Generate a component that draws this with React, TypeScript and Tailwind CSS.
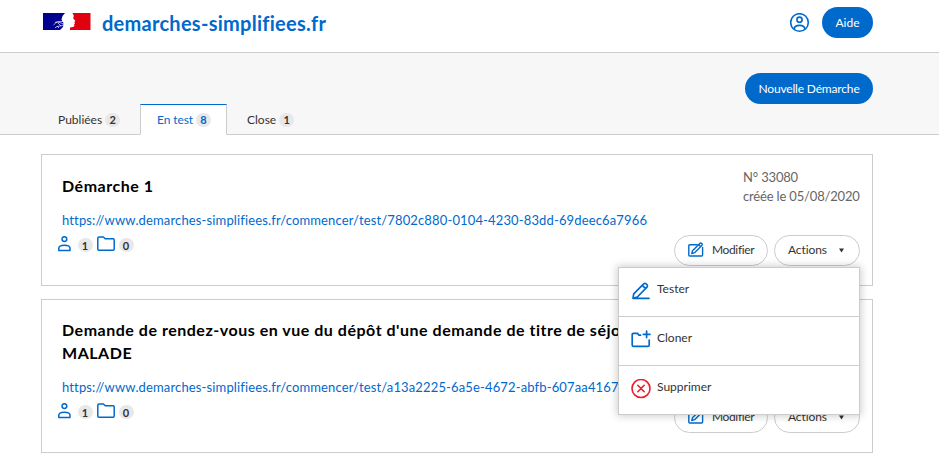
import type { ReactNode } from "react";

function FlagLogo() {
  return (
    <svg className="h-[17px] w-[48px]" viewBox="0 0 48 17">
      <path d="M0 0H22L19.5 3L18.5 6.5L20.5 10L20 14L17 17H0Z" fill="#000091" />
      <path d="M29.5 0H47.5V17H27V14.5L30 14L31.5 13L31 11.5L32 10.5L31.3 9.3L32.3 8L30.2 5.2L30.8 2.8Z" fill="#e1000f" />
      <path d="M10.5 12C13 9 16 8 20 8.5M12 9.5C15 8 17 10 21 11M12 15C15 12 17 14 20 12M15 10L18 13M14 13L16 15" stroke="#fff" strokeWidth=".7" fill="none" />
    </svg>
  );
}

function AccountIcon() {
  return (
    <svg className="size-5" viewBox="0 0 20 20" fill="none" stroke="#0069cc" strokeWidth="1.6">
      <circle cx="9.5" cy="9.5" r="8.8" />
      <circle cx="9.5" cy="6.7" r="2.6" />
      <path d="M4.2 16.2C4.2 13.4 6.2 12.4 9.5 12.4S14.8 13.4 14.8 16.2" />
    </svg>
  );
}

function PersonIcon() {
  return (
    <svg className="h-4 w-[14px]" viewBox="0 0 14 16" fill="none" stroke="#0069cc" strokeWidth="1.5">
      <circle cx="6.4" cy="3.1" r="2.4" />
      <path d="M.8 14.5V12.3C.8 10 2.8 9.2 6.4 9.2S12 10 12 12.3V14.5Z" strokeLinejoin="round" />
    </svg>
  );
}

function FolderIcon() {
  return (
    <svg className="h-4 w-[18px]" viewBox="0 0 18 16" fill="none" stroke="#0069cc" strokeWidth="1.5" strokeLinejoin="round">
      <path d="M.8 13V2.2Q.8 1 2 1H6.4L8.2 2.7H16Q17.2 2.7 17.2 3.9V13Q17.2 14.2 16 14.2H2Q.8 14.2 .8 13Z" />
    </svg>
  );
}

function EditIcon() {
  return (
    <svg className="size-4" viewBox="0 0 16 16" fill="none" stroke="#0069cc" strokeWidth="1.4" strokeLinejoin="round" strokeLinecap="round">
      <path d="M9.3 2.7H1.8Q.8 2.7 .8 3.7V13Q.8 14 1.8 14H13.6Q14.6 14 14.6 13V5.5" />
      <path d="M3.8 11.5L4.5 8.7L11.8 1.4Q12.8 .6 13.8 1.5Q14.6 2.4 13.8 3.4L6.6 10.7ZM10.7 2.7L12.7 4.6" />
    </svg>
  );
}

function PencilIcon() {
  return (
    <svg className="size-5" viewBox="0 0 20 20" fill="none" stroke="#0069cc" strokeWidth="1.7" strokeLinejoin="round" strokeLinecap="round">
      <path d="M2 17.3L2.7 12.8L12.7 2.8Q14 1.8 15.3 3L16 3.7Q17 5 16 6.2L6.3 16L2 17.3H18M11.3 4.3L14.6 7.6" />
    </svg>
  );
}

function FolderPlusIcon() {
  return (
    <svg className="size-5" viewBox="0 0 20 20" fill="none" stroke="#0069cc" strokeWidth="1.7" strokeLinejoin="round" strokeLinecap="round">
      <path d="M9.5 5.2H8L6.5 3.4H2.5Q1.2 3.4 1.2 4.7V15Q1.2 16.4 2.6 16.4H16.7Q18.2 16.4 18.2 15V10" />
      <path d="M15.6 1V7.6M12.3 4.3H19" />
    </svg>
  );
}

function DeleteIcon() {
  return (
    <svg className="size-5" viewBox="0 0 20 20" fill="none" stroke="#ed1c2e" strokeWidth="1.6" strokeLinecap="round">
      <circle cx="10" cy="9.5" r="9" />
      <path d="M6.8 6.3L13.2 12.7M13.2 6.3L6.8 12.7" />
    </svg>
  );
}

function Badge({ children }: { children: ReactNode }) {
  return (
    <span className="flex h-[14px] min-w-[15px] items-center justify-center rounded-full bg-[#e8e8e8] text-[11px] leading-none font-bold">
      {children}
    </span>
  );
}

function MenuItem({ icon, label }: { icon: ReactNode; label: string }) {
  return (
    <li className="flex h-[49px] items-start gap-[6px] border-b border-[#ccc] pt-3 pl-3 last:h-12 last:border-b-0">
      <span className="mt-px">{icon}</span>
      <span className="text-xs leading-[17px]">{label}</span>
    </li>
  );
}

function ActionsMenu() {
  return (
    <ul className="absolute top-8 right-0 z-10 w-[242px] border border-[#ccc] bg-white shadow-[0_0_8px_1px_rgba(0,0,0,0.2)]">
      <MenuItem icon={<PencilIcon />} label="Tester" />
      <MenuItem icon={<FolderPlusIcon />} label="Cloner" />
      <MenuItem icon={<DeleteIcon />} label="Supprimer" />
    </ul>
  );
}

type CardProps = { title: string; url: string; menuOpen?: boolean; number?: string; className: string };

function ProcedureCard({ title, url, menuOpen, number, className }: CardProps) {
  return (
    <article className={`flex justify-between border border-[#ccc] pl-5 ${className}`}>
      <div className="w-[612px] shrink-0">
        <h2 className="text-base leading-[23px] font-bold tracking-[0.52px] text-black">{title}</h2>
        <a className="mt-[13.5px] block text-[13px] leading-[18px] tracking-[0.14px] whitespace-nowrap text-[#0069cc]">{url}</a>
        <div className="mt-[7.5px] -ml-1 flex h-[18px] items-start">
          <PersonIcon />
          <span className="mt-[2px] ml-[5.5px]"><Badge>1</Badge></span>
          <span className="ml-1"><FolderIcon /></span>
          <span className="mt-[2px] ml-1"><Badge>0</Badge></span>
        </div>
      </div>
      <div className="flex flex-1 flex-col items-end justify-between pr-3 pb-[19px]">
        <p className="-mt-[6px] w-[117px] text-[13px] leading-[19px] tracking-[-0.17px] whitespace-nowrap text-[#666]">
          {number && (
            <>
              N° {number}
              <br />
              créée le 05/08/2020
            </>
          )}
        </p>
        <div className="relative flex shrink-0 gap-[6px] text-xs">
          <button className="flex h-[31px] w-[94px] items-center gap-2 rounded-full border border-[#ccc] bg-white pb-px pl-[13px] tracking-[-0.37px]">
            <EditIcon />
            Modifier
          </button>
          <button className="flex h-[31px] w-[86px] items-center rounded-full border border-[#ccc] bg-white pb-px pl-[13px] tracking-[-0.1px]">
            Actions
            <svg className="ml-3 h-[5px] w-[5px]" viewBox="0 0 6 5"><path d="M0 0H6L3 5Z" fill="#333" /></svg>
          </button>
          {menuOpen && <ActionsMenu />}
        </div>
      </div>
    </article>
  );
}

export default function App() {
  return (
    <div className="h-[456px] overflow-hidden bg-white font-[Lato,sans-serif] text-[#333]">
      <header className="h-[53px] border-b border-[#ccc]">
        <div className="ml-[41px] flex h-[45px] w-[832px] items-center">
          <div className="mt-[-3px] ml-[2px]"><FlagLogo /></div>
          <span className="ml-[11px] text-[20px] leading-7 font-bold tracking-[0.27px] text-[#0069cc]">demarches-simplifiees.fr</span>
          <div className="ml-auto flex items-center gap-3">
            <AccountIcon />
            <button className="h-[31px] w-[51px] rounded-full bg-[#0069cc] text-xs text-white">Aide</button>
          </div>
        </div>
      </header>

      <section className="h-[82px] border-b border-[#ccc] bg-[#f7f7f7] pt-5">
        <div className="ml-[41px] flex w-[832px] flex-col">
          <button className="h-[31px] w-[128px] self-end rounded-full bg-[#0069cc] text-xs tracking-[-0.17px] text-white">Nouvelle Démarche</button>
          <nav className="flex h-[31px] pl-[17px] text-xs">
            <div className="flex w-[82px] items-center gap-[3px]">Publiées <Badge>2</Badge></div>
            <div className="flex w-[87px] items-center gap-[3px] border border-t-[#0069cc] border-r-[#ccc] border-b-white border-l-[#ccc] bg-white pl-4 tracking-[-0.1px] text-[#0069cc]">En test <Badge>8</Badge></div>
            <div className="flex items-center gap-[3px] pl-[20px]">Close <Badge>1</Badge></div>
          </nav>
        </div>
      </section>

      <main className="ml-[41px] flex w-[832px] flex-col gap-[13px] pt-[19px]">
        <ProcedureCard
          className="h-[132px] pt-[19px]"
          title="Démarche 1"
          number="33080"
          url="https://www.demarches-simplifiees.fr/commencer/test/7802c880-0104-4230-83dd-69deec6a7966"
          menuOpen
        />
        <ProcedureCard
          className="h-[154px] pt-[18px]"
          title="Demande de rendez-vous en vue du dépôt d'une demande de titre de séjour MALADE"
          url="https://www.demarches-simplifiees.fr/commencer/test/a13a2225-6a5e-4672-abfb-607aa4167"
        />
      </main>
    </div>
  );
}
